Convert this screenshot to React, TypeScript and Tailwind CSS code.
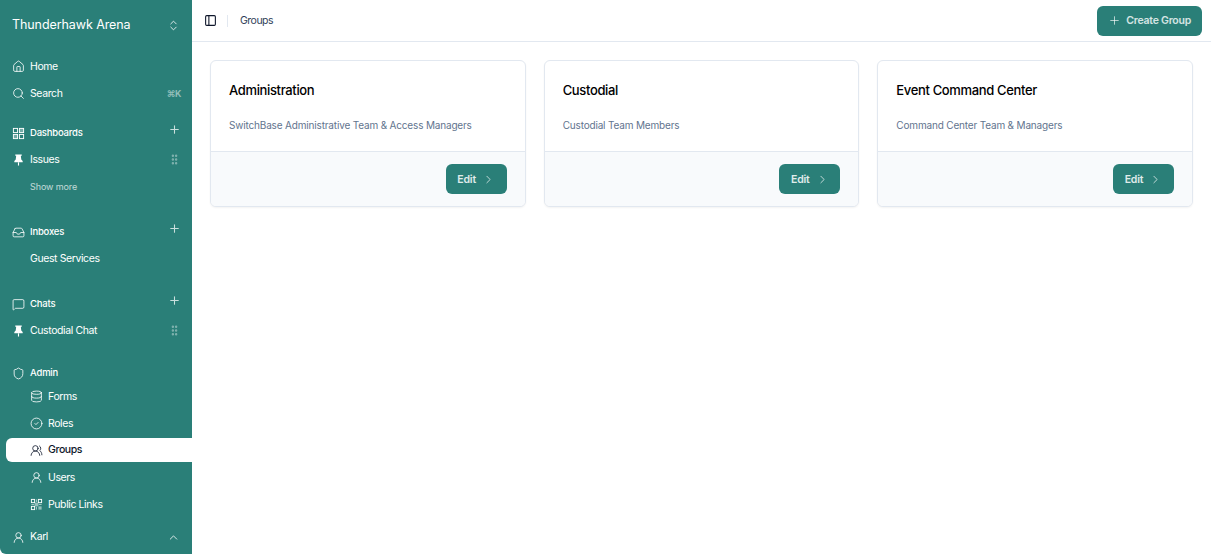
import React from "react"
import {
  ChevronRight,
  ChevronUp,
  ChevronsUpDown,
  CircleCheck,
  Database,
  GripVertical,
  Home,
  Inbox,
  MessageSquare,
  PanelLeft,
  Plus,
  Search,
  Shield,
  UserRound,
  UsersRound,
} from "lucide-react"

const groups = [
  { name: "Administration", desc: "SwitchBase Administrative Team & Access Managers" },
  { name: "Custodial", desc: "Custodial Team Members" },
  { name: "Event Command Center", desc: "Command Center Team & Managers" },
]

const adminLinks = [
  { icon: Database, label: "Forms" },
  { icon: CircleCheck, label: "Roles" },
  { icon: UsersRound, label: "Groups", active: true },
  { icon: UserRound, label: "Users" },
  { icon: LinkCode, label: "Public Links" },
]

function DashIcon({ className }: { className?: string }) {
  return (
    <svg viewBox="0 0 14 14" className={className} fill="none" stroke="currentColor" strokeWidth="1">
      <rect x="1.5" y="1.5" width="4.5" height="4.5" />
      <rect x="8" y="1.5" width="4.5" height="4.5" fill="currentColor" fillOpacity="0.35" />
      <rect x="1.5" y="8" width="4.5" height="4.5" fill="currentColor" fillOpacity="0.35" />
      <rect x="8" y="8" width="4.5" height="4.5" />
    </svg>
  )
}

function PinIcon({ className }: { className?: string }) {
  return (
    <svg viewBox="0 0 14 14" className={className} fill="currentColor">
      <path d="M3.5 1.500h7v1.500H9.500l.5 4 1.500 1.500V10h-9V8.500L4 7l.5-4h-1z" />
      <rect x="6.400" y="10" width="1.200" height="3.500" />
    </svg>
  )
}

// the public links glyph is a dense qr square, the stock one reads too open
function LinkCode({ className }: { className?: string }) {
  return (
    <svg viewBox="0 0 14 14" className={className} fill="none" stroke="currentColor" strokeWidth="1">
      <rect x="1.500" y="1.500" width="3.500" height="3.500" />
      <rect x="9" y="1.500" width="3.500" height="3.500" />
      <rect x="1.500" y="9" width="3.500" height="3.500" />
      <rect x="5" y="5" width="4" height="4" fill="currentColor" fillOpacity="0.5" stroke="none" />
      <rect x="9" y="9" width="3.500" height="3.500" fill="currentColor" fillOpacity="0.5" stroke="none" />
      <path d="M7 1.500v3M1.500 7h3M9.500 7h3M7 9.500v3" strokeOpacity="0.6" />
    </svg>
  )
}

function SectionHead({ icon: Icon, label, add }: { icon: any; label: string; add?: boolean }) {
  return (
    <div className="flex h-6 items-center pl-3 pr-[11px]">
      <Icon className="mr-[5px] h-[13px] w-[13px]" strokeWidth={1.5} />
      <span className="text-[9.5px] font-medium tracking-[-0.2px]">{label}</span>
      {add && <Plus className="relative -top-[4px] ml-auto h-[13px] w-[13px] opacity-75" strokeWidth={2} />}
    </div>
  )
}

function NavRow({ icon: Icon, label, grip }: { icon?: any; label: string; grip?: boolean }) {
  return (
    <div className="flex h-[27px] items-center pl-3 pr-[11px] text-[10.5px] tracking-[-0.4px]">
      <span className="mr-[5px] flex w-[13px] shrink-0 justify-center">
        {Icon && <Icon className="h-[13px] w-[13px]" strokeWidth={1.5} />}
      </span>
      <span>{label}</span>
      {grip && <GripVertical className="ml-auto h-[13px] w-[13px] opacity-40" strokeWidth={2.5} />}
    </div>
  )
}

export default function App() {
  return (
    <div className="flex h-[554px] w-[1211px] overflow-hidden bg-white font-['Inter',sans-serif] text-slate-900">
      {/* Sidebar */}
      <aside className="flex w-[192px] shrink-0 flex-col rounded-bl-md bg-[#2a7f78] text-white">
        <div className="flex h-[50px] shrink-0 items-center pl-3 pr-[12px] pt-[1px]">
          <span className="text-[12.5px] tracking-[-0.08px]">Thunderhawk Arena</span>
          <ChevronsUpDown className="ml-auto h-[13px] w-[13px]" strokeWidth={1.5} />
        </div>

        <div className="mt-[3px]">
          <NavRow icon={Home} label="Home" />
          <div className="flex h-[27px] items-center pl-3 pr-[11px] text-[10.5px] tracking-[-0.4px]">
            <Search className="mr-[5px] h-[13px] w-[13px]" strokeWidth={1.5} />
            <span>Search</span>
            <span className="ml-auto text-[9px] font-semibold opacity-50">⌘K</span>
          </div>
        </div>

        <div className="mt-[14px]">
          <SectionHead icon={DashIcon} label="Dashboards" add />
          <div className="mt-[1px]">
            <NavRow icon={PinIcon} label="Issues" grip />
          </div>
          <div className="flex h-[28px] items-center pl-[30px] text-[9px] tracking-[-0.1px] opacity-70">Show more</div>
        </div>

        <div className="mt-[19px]">
          <SectionHead icon={Inbox} label="Inboxes" add />
          <div className="mt-[1px]">
            <NavRow label="Guest Services" />
          </div>
        </div>

        <div className="mt-[20px]">
          <SectionHead icon={MessageSquare} label="Chats" add />
          <div className="mt-[1px]">
            <NavRow icon={PinIcon} label="Custodial Chat" grip />
          </div>
        </div>

        <div className="mt-[17px]">
          <SectionHead icon={Shield} label="Admin" />
          <div className="-mt-[2px] flex flex-col">
            {adminLinks.map((link) => (
              <div
                key={link.label}
                className={`ml-[6px] flex h-[27px] items-center pl-6 text-[10.5px] tracking-[-0.4px] ${
                  link.active ? "mt-[1px] mb-[2px] !h-6 rounded-l-md bg-white font-medium text-slate-900" : ""
                }`}
              >
                <link.icon className="mr-[5px] h-[13px] w-[13px]" strokeWidth={1.5} />
                <span>{link.label}</span>
              </div>
            ))}
          </div>
        </div>

        <div className="mt-[7px] flex h-6 items-center pl-3 pr-[12px] text-[10.5px] tracking-[-0.4px]">
          <UserRound className="mr-[5px] h-[13px] w-[13px]" strokeWidth={1.5} />
          <span>Karl</span>
          <ChevronUp className="ml-auto h-[13px] w-[13px]" strokeWidth={1.5} />
        </div>
      </aside>

      {/* Main */}
      <main className="flex min-w-0 flex-1 flex-col">
        <header className="flex h-[42px] shrink-0 items-center border-b border-slate-200 pl-3 pr-[9px]">
          <PanelLeft className="h-[13px] w-[13px] text-slate-900" strokeWidth={2} />
          <div className="mx-[10px] h-3 w-px bg-slate-200" />
          <span className="ml-[2px] text-[10.5px] tracking-[-0.5px] text-slate-700">Groups</span>
          <button className="ml-auto flex h-[30px] items-center gap-[5px] rounded-md bg-[#2a7f78] pl-[11px] pr-[11px] text-[10.5px] font-semibold tracking-[-0.25px] text-white/80">
            <Plus className="h-[13px] w-[13px]" strokeWidth={1.5} />
            Create Group
          </button>
        </header>

        <div className="grid grid-cols-3 gap-[18px] px-[18px] pt-[18px]">
          {groups.map((group) => (
            <div key={group.name} className="overflow-hidden rounded-md border border-slate-200 bg-white shadow-xs">
              <div className="h-[91px] border-b border-slate-200 px-[18px] pt-[20px]">
                <h3 className="text-[13px] leading-[18px] font-medium tracking-[-0.35px] text-black">{group.name}</h3>
                <p className="mt-[19px] text-[10px] leading-[14px] tracking-[-0.17px] text-slate-500">{group.desc}</p>
              </div>
              <div className="flex h-[54px] items-center justify-end bg-slate-50 pr-[18px]">
                <button className="flex h-[30px] w-[61px] items-center justify-center gap-[6px] rounded-md bg-[#2a7f78] pt-[1px] text-[10.5px] font-semibold tracking-[-0.2px] text-white/85">
                  Edit
                  <ChevronRight className="h-[13px] w-[13px]" strokeWidth={1.5} />
                </button>
              </div>
            </div>
          ))}
        </div>
      </main>
    </div>
  )
}
